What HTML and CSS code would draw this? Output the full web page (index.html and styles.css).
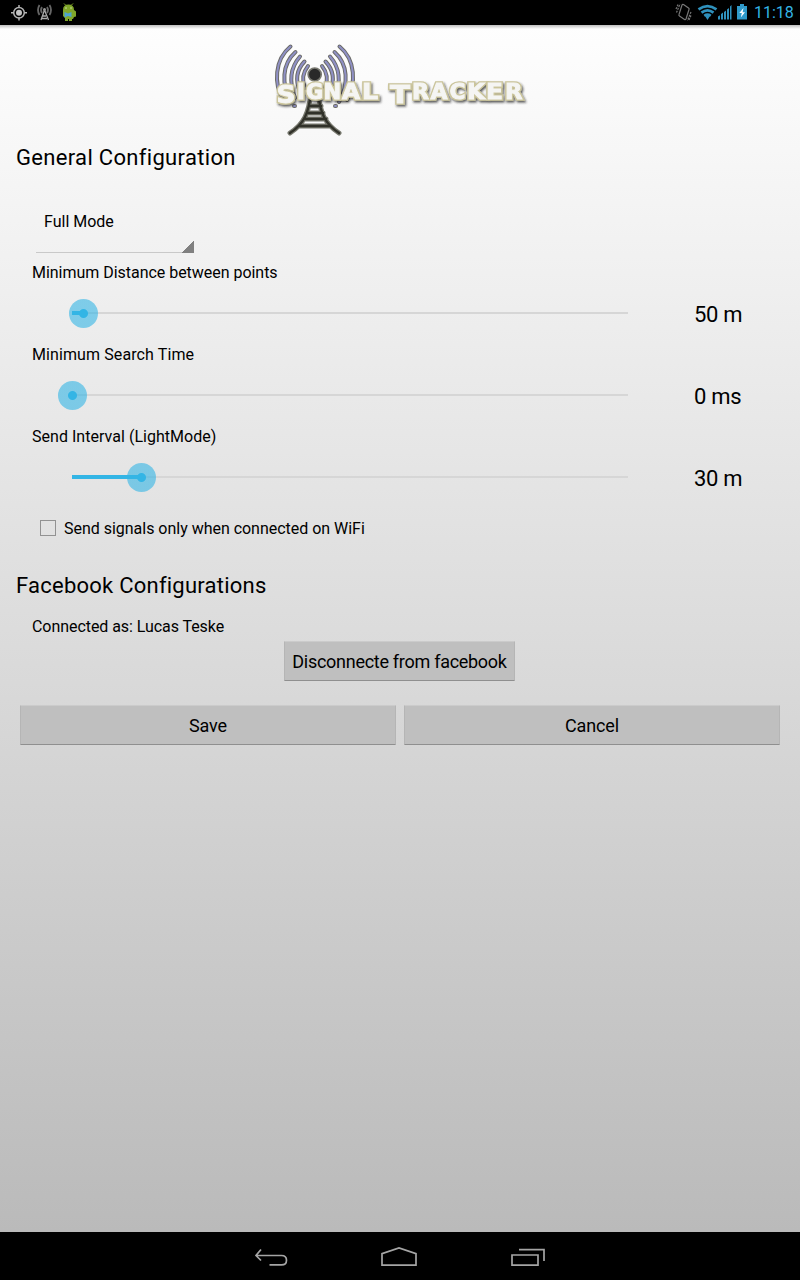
FILE: index.html
```html
<!DOCTYPE html>
<html lang="en">
<head>
<meta charset="utf-8">
<title>Signal Tracker</title>
<link rel="stylesheet" href="styles.css">
</head>
<body>
<header class="status">
  <svg class="status-left" width="90" height="25" viewBox="0 0 90 25">
    <g fill="none" stroke="#b4b4b4" stroke-width="1.5"><circle cx="19" cy="12.7" r="5.3"/><path d="M19 5v3M19 17.500v3M11 12.700h3M24 12.700h3"/></g>
    <circle cx="19" cy="12.700" r="3" fill="#c4c4c4"/>
    <g fill="none" stroke="#666" stroke-width="1.800"><path d="M39.500 5q-3 5 0 10M42 7q-2 3 0 6M49.500 5q3 5 0 10M47 7q2 3 0 6"/><path stroke="#aaa" stroke-width="1.300" d="M44.500 10L41 20M44.500 10l4 10M43 16h3M42 18.500h5"/></g>
    <circle cx="44.500" cy="9.500" r="1.500" fill="#999"/>
    <path d="M63 10Q63 4.500 68.500 4.500T74 10l2 1.500v5l-2 .5-1 2h-1v2h-3v-2h-1v2h-3v-3l-2-2z" fill="#80a62a"/>
    <path d="M64 3.500l2 2M73 3.500l-2 2" stroke="#80a62a"/>
    <circle cx="66" cy="8" r=".7" fill="#dfe8c4"/><circle cx="71" cy="8" r=".7" fill="#dfe8c4"/>
    <path d="M64.500 12l3.500 1.500 3.500-1.500v5l-3.500-1-3.500 1.500z" fill="#4da3cf"/>
  </svg>
  <div class="status-right">
    <svg width="78" height="25" viewBox="0 0 78 25">
      <g fill="none" stroke="#777" stroke-width="1.200"><path d="M8.500 4.500l5 3.500q1 .7.500 1.500l-3 9.500q-.5 1-1.500.5l-5-3.500q-1-.7-.5-1.500L7 5q.5-1 1.500-.5z"/><path d="M1.500 12.500l3.500-8.500M1 9l2-4.500M16 12l-3.500 8.500M16 15.500l-2 4.500" stroke-dasharray="2 1"/></g>
      <g fill="none" stroke="#2f91bd" stroke-width="2.700"><path d="M23.500 9.300q9-6.500 18 0M26.500 12.600q6-4.500 12 0M29.300 15.800q3.200-2.300 6.400 0"/></g>
      <path d="M30.300 16.500q2.200-1.500 4.400 0L32.500 20z" fill="#2f91bd"/>
      <path d="M43 19.500v-3l2-1.200v4.200zM46 19.500v-5.500l2-1.500v7zM49 19.500V12l2-1.500v9zM52 19.500V9.500L54 8v11.500zM55 19.500V6.500L56.500 5v14.500z" fill="#2f91bd"/>
      <path d="M62 6h3V4h4v2h3v13.500H62z" fill="#2f9aca"/><path d="M68.500 8l-4.200 5h2.500l-1 4.500 4.200-5.300h-2.400z" fill="#fff"/>
    </svg>
    <span class="clock">11:18</span>
  </div>
</header>
<main class="screen">
  <div class="brand">
    <svg width="260" height="100" viewBox="270 40 260 100" role="img" aria-label="Signal Tracker">
      <defs>
        <filter id="sh" x="-10%" y="-20%" width="120%" height="150%"><feDropShadow dx="1.300" dy="1.800" stdDeviation="1" flood-color="#222" flood-opacity=".75"/></filter>
        <g id="waves" fill="none" stroke-linecap="round">
          <path d="M290.500 46.500C274 60 274 84 283 100M294 106h1"/><path d="M295.500 52C282 64 281 84 291 102"/>
          <path d="M300 56.500Q285.500 73 295 98"/><path d="M304.500 61.500Q292.500 74 300 92"/><path d="M308 66Q300 76 305 88"/>
        </g>
      </defs>
      <use href="#waves" stroke="#6b6b68" stroke-width="4"/><use href="#waves" stroke="#8f90c5" stroke-width="2"/>
      <g transform="translate(630 0) scale(-1 1)"><use href="#waves" stroke="#6b6b68" stroke-width="4"/><use href="#waves" stroke="#8f90c5" stroke-width="2"/></g>
      <g fill="none" stroke-linecap="round" stroke-linejoin="round">
        <path d="M311 92C309 113 304 124 290 133M318 92C320 113 325 124 339 133M309 106h12M307 113h16M304 119h22M300 126h30" stroke="#77786e" stroke-width="5"/>
        <path d="M311 92C309 113 304 124 290 133M318 92C320 113 325 124 339 133M309 106h12M307 113h16M304 119h22M300 126h30" stroke="#303129" stroke-width="2.400"/>
      </g>
      <circle cx="314.700" cy="74.500" r="6.500" fill="#292929" stroke="#77776f" stroke-width="1.700"/>
      <g filter="url(#sh)">
        <g class="logo-outline"><g id="wordmark" class="wordmark">
          <text y="103" font-size="25"><tspan x="276.500" textLength="19" lengthAdjust="spacingAndGlyphs">S</tspan></text>
          <text y="99" font-size="21"><tspan x="297">I</tspan><tspan x="306">G</tspan><tspan x="323.500">N</tspan><tspan x="342" textLength="18" lengthAdjust="spacingAndGlyphs">A</tspan><tspan x="362" textLength="16" lengthAdjust="spacingAndGlyphs">L</tspan></text>
          <text y="103" font-size="25"><tspan x="390" textLength="20" lengthAdjust="spacingAndGlyphs">T</tspan></text>
          <text y="99" font-size="21"><tspan x="412" textLength="17" lengthAdjust="spacingAndGlyphs">R</tspan><tspan x="430.500" textLength="17" lengthAdjust="spacingAndGlyphs">A</tspan><tspan x="449.500" textLength="16" lengthAdjust="spacingAndGlyphs">C</tspan><tspan x="467" textLength="18" lengthAdjust="spacingAndGlyphs">K</tspan><tspan x="486" textLength="17" lengthAdjust="spacingAndGlyphs">E</tspan><tspan x="505" textLength="17.500" lengthAdjust="spacingAndGlyphs">R</tspan></text>
        </g></g>
        <use class="logo-face" href="#wordmark"/>
      </g>
    </svg>
  </div>
  <h1 class="heading">General Configuration</h1>
  <section class="settings">
    <div class="spinner"><span>Full Mode</span></div>
    <div class="label">Minimum Distance between points</div>
    <div class="row"><div class="slider"><i class="fill" style="width:11px"></i><i class="thumb"></i></div><output>50 m</output></div>
    <div class="label search">Minimum Search Time</div>
    <div class="row"><div class="slider"><i class="fill" style="width:0"></i><i class="thumb"></i></div><output>0 ms</output></div>
    <div class="label interval">Send Interval (LightMode)</div>
    <div class="row"><div class="slider"><i class="fill" style="width:69px"></i><i class="thumb"></i></div><output>30 m</output></div>
    <label class="check"><span class="box"></span><span>Send signals only when connected on WiFi</span></label>
  </section>
  <h2 class="heading facebook">Facebook Configurations</h2>
  <div class="label account">Connected as: Lucas Teske</div>
  <button class="button disconnect">Disconnecte from facebook</button>
  <div class="actions"><button class="button">Save</button><button class="button">Cancel</button></div>
</main>
<nav class="nav">
  <svg width="128" height="48" viewBox="207 1232 128 48"><path d="M261 1249.500l-5 6 5 5M256 1255.500h25.500q5 0 5 4.700t-5 4.700H269.500"/></svg>
  <svg width="128" height="48" viewBox="335 1232 128 48"><path d="M382 1265.200v-11.500l17-5.700 17 5.700v11.500z"/></svg>
  <svg width="128" height="48" viewBox="463 1232 128 48"><path d="M512 1255h26v10.200h-26zM519 1249.700h25V1261"/></svg>
</nav>
</body>
</html>
```
FILE: styles.css
```css
* { box-sizing: border-box; }
body { margin: 0; width: 800px; height: 1280px; display: flex; flex-direction: column; overflow: hidden; font-family: Roboto, sans-serif; color: #000; background: #000; }
svg { display: block; }
.status { height: 25px; flex: none; display: flex; justify-content: space-between; background: #000; }
.status-right { display: flex; padding-right: 6px; }
.clock { color: #33b5e5; font-size: 16px; line-height: 25px; width: 40px; margin-left: 1px; white-space: nowrap; }
.screen { flex: 1; display: flex; flex-direction: column; background: linear-gradient(rgba(0,0,0,.25), transparent) top / 100% 4px no-repeat, linear-gradient(#fefefe, #bababa); }
.brand { height: 118px; padding: 15px 0 0 270px; }
.wordmark { font-family: "DejaVu Sans", sans-serif; font-weight: 700; stroke-linejoin: miter; }
.logo-outline { fill: #cbc59c; stroke: #cbc59c; stroke-width: 3.6px; }
.logo-face { fill: #f5f5f3; stroke: #f5f5f3; stroke-width: .9px; }
.heading { margin: 0; padding-left: 16px; height: 30px; font-size: 22px; line-height: 30px; font-weight: 400; letter-spacing: .32px; }
.facebook { letter-spacing: .24px; }
.settings { padding: 27px 32px 0; height: 398px; }
.spinner { width: 158px; height: 53px; margin: 0 0 10px 4px; padding: 8px; line-height: 27px; font-size: 16px; background: linear-gradient(135deg, transparent 50%, #808080 50%) right bottom / 12px 12px no-repeat, linear-gradient(#c9c9c9, #c9c9c9) bottom / 100% 1px no-repeat; }
.label { height: 20px; font-size: 16px; line-height: 20px; letter-spacing: -.03px; }
.search { letter-spacing: .1px; }
.interval { letter-spacing: .03px; }
.row { height: 62px; display: flex; align-items: center; padding-left: 40px; }
.slider { width: 556px; height: 30px; display: flex; align-items: center; background: linear-gradient(#d6d6d6, #d6d6d6) center / 100% 2px no-repeat; margin-top: -2px; }
.fill { height: 4px; background: #33b5e5; }
.thumb { width: 29px; height: 29px; flex: none; margin-left: -14.5px; border-radius: 50%; background: radial-gradient(circle, #33b5e5 4px, rgba(51,181,229,.6) 5px); }
output { margin-left: 66px; font-size: 22px; line-height: 28px; margin-top: 2px; letter-spacing: -.3px; }
.check { display: flex; align-items: center; height: 32px; margin: 3px 0 0 8px; gap: 8px; font-size: 16px; letter-spacing: -.02px; }
.box { width: 16px; height: 16px; border: 1px solid #929292; }
.account { margin: 16px 0 4px 32px; letter-spacing: -.06px; }
.button { height: 40px; padding: 2px 0 0; border: 1px solid #b5b5b5; border-top-color: #cbcbcb; border-bottom-color: #8f8f8f; border-radius: 1px; background: #bfbfbf; font: 18px/36px Roboto, sans-serif; letter-spacing: -.1px; color: #000; }
.disconnect { width: 231px; margin-left: 284px; letter-spacing: -.28px; }
.actions { display: flex; gap: 8px; padding: 24px 20px 0; }
.actions .button { flex: 1; }
.nav { height: 48px; flex: none; display: flex; justify-content: center; padding-right: 2px; background: #000; }
.nav path { fill: none; stroke: #a5a5a5; stroke-width: 1.700px; }
```
